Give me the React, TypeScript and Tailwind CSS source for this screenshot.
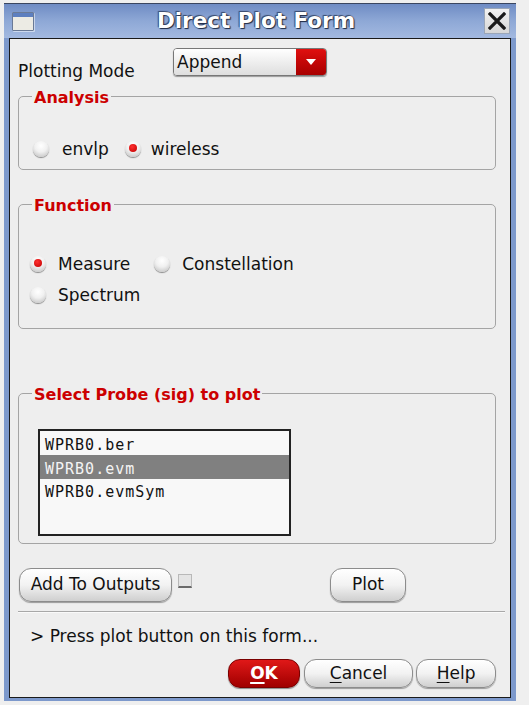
import React from "react";

const font = "font-['DejaVu_Sans',sans-serif]";

function Radio({ checked }: { checked?: boolean }) {
  return (
    <span className="flex h-[16px] w-[16px] shrink-0 items-center justify-center rounded-full bg-[radial-gradient(circle_at_50%_30%,#ffffff_0%,#f0f0f0_45%,#c8c8c8_85%,#9a9a9a_100%)] shadow-[0_1px_1px_#8a8a8a]">
      {checked ? <span className="mb-[2px] h-[8px] w-[8px] rounded-full bg-[radial-gradient(circle_at_40%_35%,#ff3030,#c00000)]" /> : null}
    </span>
  );
}

function Btn({ children, w, className = "" }: { children: React.ReactNode; w: string; className?: string }) {
  return (
    <div
      className={`flex items-center justify-center rounded-[12px] border border-[#8c8c8c] bg-gradient-to-b from-[#ffffff] via-[#f2f2f2] to-[#cfcfcf] text-[17px] text-[#111] shadow-[0_1px_1px_#9a9a9a] ${w} ${className}`}
    >
      {children}
    </div>
  );
}

function Legend({ children }: { children: React.ReactNode }) {
  return (
    <legend className="ml-[13px] px-[2px] text-[16px] font-bold leading-[18px] text-[#cc0000]">
      <span className="relative top-[2px]">{children}</span>
    </legend>
  );
}

export default function App() {
  return (
    <div className={`h-[705px] w-[529px] bg-[#efefef] pl-[4px] pt-[3px] ${font}`}>
      <div className="w-[512px] border-t border-[#3a4660] bg-[#7d99cc] pb-[3px]">
        {/* Title bar */}
        <div className="flex h-[34px] items-center bg-gradient-to-b from-[#6f8cc4] via-[#8ea8d6] to-[#a3b9e0] pl-[8px] pr-[6px]">
          <div className="flex h-[19px] w-[22px] flex-col overflow-hidden rounded-[1px] border border-[#6a7a96] bg-[#ecebe4] shadow-[1px_1px_0_#ffffff80]">
            <div className="h-[4px] w-full bg-[#5d7fbf]" />
          </div>
          <div className="flex flex-1 justify-center pr-[6px]">
            <span className="text-[21.5px] font-bold leading-none text-white [text-shadow:0_0_1px_#1e2a44,1px_1px_1px_#1e2a44,-1px_-1px_1px_#3c4d70]">
              Direct Plot Form
            </span>
          </div>
          <div className="flex h-[26px] w-[26px] items-center justify-center border border-[#9aa6b8] bg-gradient-to-b from-[#f2f2f2] to-[#d6d6d6]">
            <svg width="18" height="18" viewBox="0 0 18 18">
              <path d="M2 2 L16 16 M16 2 L2 16" stroke="#1a1a1a" strokeWidth="3.2" strokeLinecap="square" />
            </svg>
          </div>
        </div>
        {/* Content */}
        <div className="mx-[5px] flex h-[660px] flex-col border border-[#1a1a1a] bg-[#eeeeee] pl-[8px] pr-[14px] pt-[9px] text-[17px] text-[#111]">
          {/* Plotting mode */}
          <div className="flex h-[39px] items-start">
            <div className="mt-[13px] w-[155px] leading-[20px]">Plotting Mode</div>
            <div className="flex h-[28px] w-[154px] overflow-hidden rounded-[4px] border border-[#777] shadow-[0_1px_1px_#999]">
              <div className="flex flex-1 items-center bg-gradient-to-b from-[#ffffff] to-[#dedede] pl-[3px] leading-none">Append</div>
              <div className="flex w-[30px] items-center justify-center bg-gradient-to-b from-[#e01010] to-[#a80000]">
                <svg width="10" height="6" viewBox="0 0 10 6">
                  <path d="M0 0 H10 L5 6 Z" fill="#ffffff" />
                </svg>
              </div>
            </div>
          </div>

          {/* Analysis */}
          <fieldset className="rounded-[5px] border border-[#a4a4a4] pb-[10px]">
            <Legend>Analysis</Legend>
            <div className="mt-[34px] flex h-[20px] items-center pl-[14px]">
              <Radio />
              <span className="ml-[13px] leading-[20px]">envlp</span>
              <span className="ml-[16px]">
                <Radio checked />
              </span>
              <span className="ml-[10px] leading-[20px]">wireless</span>
            </div>
          </fieldset>

          {/* Function */}
          <fieldset className="mt-[25px] rounded-[5px] border border-[#a4a4a4] pb-[23px]">
            <Legend>Function</Legend>
            <div className="mt-[41px] flex h-[20px] items-center pl-[11px]">
              <Radio checked />
              <span className="ml-[12px] leading-[20px]">Measure</span>
              <span className="ml-[24px]">
                <Radio />
              </span>
              <span className="ml-[12px] leading-[20px]">Constellation</span>
            </div>
            <div className="mt-[11px] flex h-[20px] items-center pl-[11px]">
              <Radio />
              <span className="ml-[12px] leading-[20px]">Spectrum</span>
            </div>
          </fieldset>

          {/* Probe */}
          <fieldset className="mt-[55px] rounded-[5px] border border-[#a4a4a4] pb-[7px]">
            <Legend>Select Probe (sig) to plot</Legend>
            <div className="ml-[19px] mt-[27px] h-[107px] w-[253px] border-2 border-[#222] bg-[#f8f8f8] font-['DejaVu_Sans_Mono',monospace] text-[15px] font-medium tracking-[1px]">
              <div className="flex h-[24px] items-center pl-[5px] pt-[5px] text-[#111]">WPRB0.ber</div>
              <div className="flex h-[24px] items-center bg-[#808080] pl-[5px] pt-[5px] text-[#f4f4f4]">WPRB0.evm</div>
              <div className="flex h-[24px] items-center pl-[5px] pt-[3px] text-[#111]">WPRB0.evmSym</div>
            </div>
          </fieldset>

          {/* Buttons row */}
          <div className="mt-[24px] flex items-start">
            <Btn w="ml-[1px] h-[34px] w-[153px]">Add To Outputs</Btn>
            <div className="ml-[6px] mt-[6px] h-[14px] w-[14px] border border-[#b8b8b8] border-b-2 border-b-[#6a6a6a] bg-[#e4e4e4]" />
            <Btn w="ml-[138px] h-[34px] w-[76px]">Plot</Btn>
          </div>

          {/* Separator */}
          <div className="mt-[9px] h-[2px] w-[487px] border-t border-[#a8a8a8] border-b border-b-[#fafafa]" />

          {/* Status */}
          <div className="ml-[12px] mt-[13px] leading-[20px]">&gt; Press plot button on this form...</div>

          {/* Bottom buttons */}
          <div className="mt-[13px] flex">
            <div className="ml-[210px] flex h-[29px] w-[73px] items-center justify-center rounded-[12px] border border-[#7a0000] bg-gradient-to-b from-[#e01818] to-[#a00000] text-[17px] font-bold text-white shadow-[0_1px_1px_#8a8a8a]">
              <span className="underline decoration-2 underline-offset-[3px]">O</span>K
            </div>
            <Btn w="ml-[4px] h-[29px] w-[111px]">
              <span className="underline underline-offset-[3px]">C</span>ancel
            </Btn>
            <Btn w="ml-[3px] h-[29px] w-[81px]">
              <span className="underline underline-offset-[3px]">H</span>elp
            </Btn>
          </div>
        </div>
      </div>
    </div>
  );
}
